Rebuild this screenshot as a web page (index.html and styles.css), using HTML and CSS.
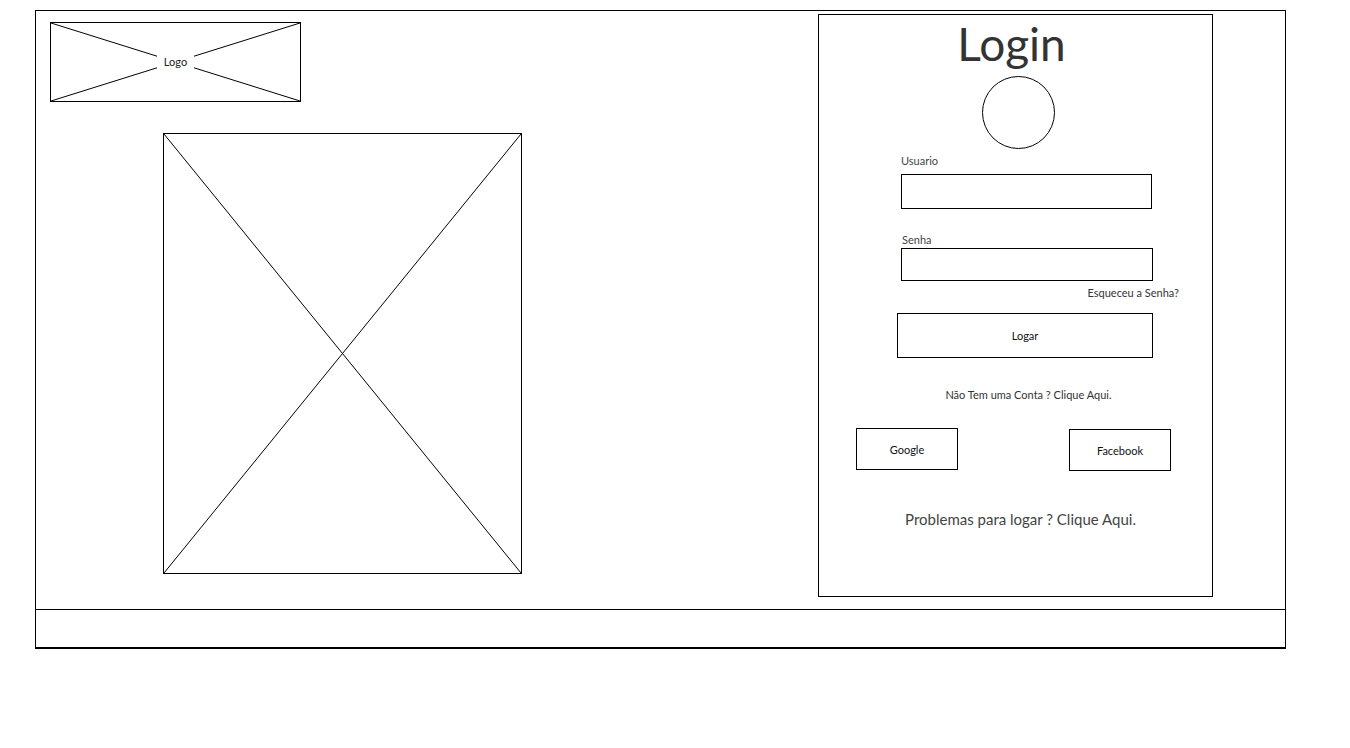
FILE: index.html
```html
<!DOCTYPE html>
<html lang="pt">
<head>
<meta charset="utf-8">
<title>Login</title>
<link rel="stylesheet" href="styles.css">
</head>
<body>
<div class="frame">
  <div class="main">
    <div class="left">
      <div class="logo">
        <svg class="xlines" viewBox="0 0 100 100" preserveAspectRatio="none"><line x1="0" y1="0" x2="100" y2="100" vector-effect="non-scaling-stroke"/><line x1="100" y1="0" x2="0" y2="100" vector-effect="non-scaling-stroke"/></svg>
        <span class="logo-text">Logo</span>
      </div>
      <div class="picture">
        <svg class="xlines" viewBox="0 0 100 100" preserveAspectRatio="none"><line x1="0" y1="0" x2="100" y2="100" vector-effect="non-scaling-stroke"/><line x1="100" y1="0" x2="0" y2="100" vector-effect="non-scaling-stroke"/></svg>
      </div>
    </div>
    <div class="panel">
      <h1 class="title">Login</h1>
      <div class="avatar"></div>
      <div class="label label-user">Usuario</div>
      <div class="input input-user"></div>
      <div class="label label-pass">Senha</div>
      <div class="input input-pass"></div>
      <div class="forgot">Esqueceu a Senha?</div>
      <div class="btn btn-login">Logar</div>
      <div class="signup">Não Tem uma Conta ? Clique Aqui.</div>
      <div class="social">
        <div class="btn btn-google">Google</div>
        <div class="btn btn-facebook">Facebook</div>
      </div>
      <div class="trouble">Problemas para logar ? Clique Aqui.</div>
    </div>
  </div>
  <div class="footer"></div>
</div>
</body>
</html>
```
FILE: styles.css
```css
html, body {
  margin: 0;
  padding: 0;
  background: #fff;
}
body {
  font-family: Lato, "Open Sans", sans-serif;
  color: #333;
}
.frame {
  margin: 10px 0 0 35px;
  width: 1249px;
  border: 1px solid #000;
  border-bottom: 2px solid #000;
}
.main {
  height: 598px;
  display: flex;
  align-items: flex-start;
}
.left {
  margin-left: 14px;
  width: 768px;
  flex: none;
}
.logo {
  position: relative;
  margin-top: 11px;
  width: 249px;
  height: 78px;
  border: 1px solid #000;
  display: flex;
  align-items: center;
  justify-content: center;
}
.xlines {
  position: absolute;
  left: 0;
  top: 0;
  width: 100%;
  height: 100%;
  stroke: #000;
  stroke-width: 1;
}
.logo-text {
  position: relative;
  background: #fff;
  padding: 2px 7px;
  font-size: 11px;
  line-height: 14px;
  color: #222;
}
.picture {
  position: relative;
  margin: 31px 0 0 113px;
  width: 357px;
  height: 439px;
  border: 1px solid #000;
}
.panel {
  margin-top: 3px;
  width: 393px;
  height: 581px;
  border: 1px solid #000;
  flex: none;
  display: flex;
  flex-direction: column;
  align-items: flex-start;
}
.title {
  margin: 5px 0 0 0;
  width: 100%;
  padding-right: 8px;
  box-sizing: border-box;
  text-align: center;
  font-weight: normal;
  font-size: 46px;
  line-height: 47px;
  color: #333;
}
.avatar {
  margin: 9px 0 0 163px;
  width: 71px;
  height: 71px;
  border: 1px solid #000;
  border-radius: 50%;
}
.label {
  font-size: 11px;
  line-height: 14px;
  color: #444;
}
.label-user {
  margin: 5px 0 0 82px;
}
.label-pass {
  margin: 24px 0 0 83px;
}
.input {
  border: 1px solid #000;
  box-sizing: border-box;
}
.input-user {
  margin: 6px 0 0 82px;
  width: 251px;
  height: 35px;
}
.input-pass {
  margin: 1px 0 0 82px;
  width: 252px;
  height: 33px;
}
.forgot {
  align-self: flex-end;
  margin: 5px 33px 0 0;
  font-size: 11px;
  line-height: 14px;
  color: #333;
}
.btn {
  border: 1px solid #000;
  box-sizing: border-box;
  display: flex;
  align-items: center;
  justify-content: center;
  font-size: 11px;
  color: #111;
}
.btn-login {
  margin: 13px 0 0 78px;
  width: 256px;
  height: 45px;
}
.signup {
  margin: 30px 0 0 0;
  width: 100%;
  padding-left: 26px;
  box-sizing: border-box;
  text-align: center;
  font-size: 11px;
  line-height: 14px;
  color: #333;
}
.social {
  margin: 26px 0 0 37px;
  display: flex;
  align-items: flex-start;
  gap: 111px;
}
.btn-google {
  width: 102px;
  height: 42px;
}
.btn-facebook {
  margin-top: 1px;
  width: 102px;
  height: 42px;
}
.trouble {
  margin: 38px 0 0 0;
  width: 100%;
  padding-left: 10px;
  box-sizing: border-box;
  text-align: center;
  font-size: 15px;
  line-height: 20px;
  color: #444;
}
.footer {
  border-top: 1px solid #000;
  height: 37px;
}
```
